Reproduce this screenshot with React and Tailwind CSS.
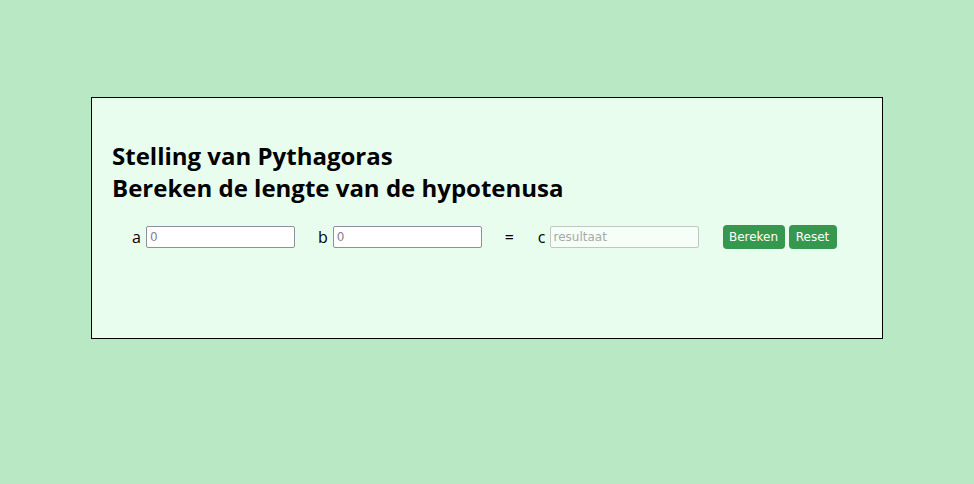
export default function App() {
  return (
    <div className="min-h-[484px] w-full bg-[#b8e9c4] pt-[97px]" style={{ fontFamily: '"Open Sans", sans-serif' }}>
      <div className="mx-auto box-border h-[242px] w-[792px] border border-black bg-[#e8fdee] px-[20px] pt-[42px]">
        <h1 className="text-[24px] font-bold leading-[32px] text-black">
          Stelling van Pythagoras
          <br />
          Bereken de lengte van de hypotenusa
        </h1>
        <div className="mt-[21px] flex items-center pl-[20px] text-[16px] text-black">
          <span>a</span>
          <input
            type="text"
            placeholder="0"
            className="ml-[5px] h-[22px] w-[149px] rounded-[2px] border border-[#8f8f9d] bg-white px-[3px] text-[12px] placeholder:text-[#8a8090]"
            style={{ fontFamily: '"DejaVu Sans", sans-serif' }}
          />
          <span className="ml-[23px]">b</span>
          <input
            type="text"
            placeholder="0"
            className="ml-[5px] h-[22px] w-[149px] rounded-[2px] border border-[#8f8f9d] bg-white px-[3px] text-[12px] placeholder:text-[#8a8090]"
            style={{ fontFamily: '"DejaVu Sans", sans-serif' }}
          />
          <span className="ml-[23px]">=</span>
          <span className="ml-[24px]">c</span>
          <input
            type="text"
            placeholder="resultaat"
            readOnly
            className="ml-[4px] h-[22px] w-[149px] rounded-[2px] border border-[#c4c4c4] bg-[#f5fff8] px-[3px] text-[12px] placeholder:text-[#a8a8a8]"
            style={{ fontFamily: '"DejaVu Sans", sans-serif' }}
          />
          <button
            className="ml-[24px] h-[24px] w-[62px] rounded-[4px] bg-[#36974f] text-[12px] text-white"
            style={{ fontFamily: '"DejaVu Sans", sans-serif' }}
          >
            Bereken
          </button>
          <button
            className="ml-[4px] h-[24px] w-[48px] rounded-[4px] bg-[#36974f] text-[12px] text-white"
            style={{ fontFamily: '"DejaVu Sans", sans-serif' }}
          >
            Reset
          </button>
        </div>
      </div>
    </div>
  )
}
